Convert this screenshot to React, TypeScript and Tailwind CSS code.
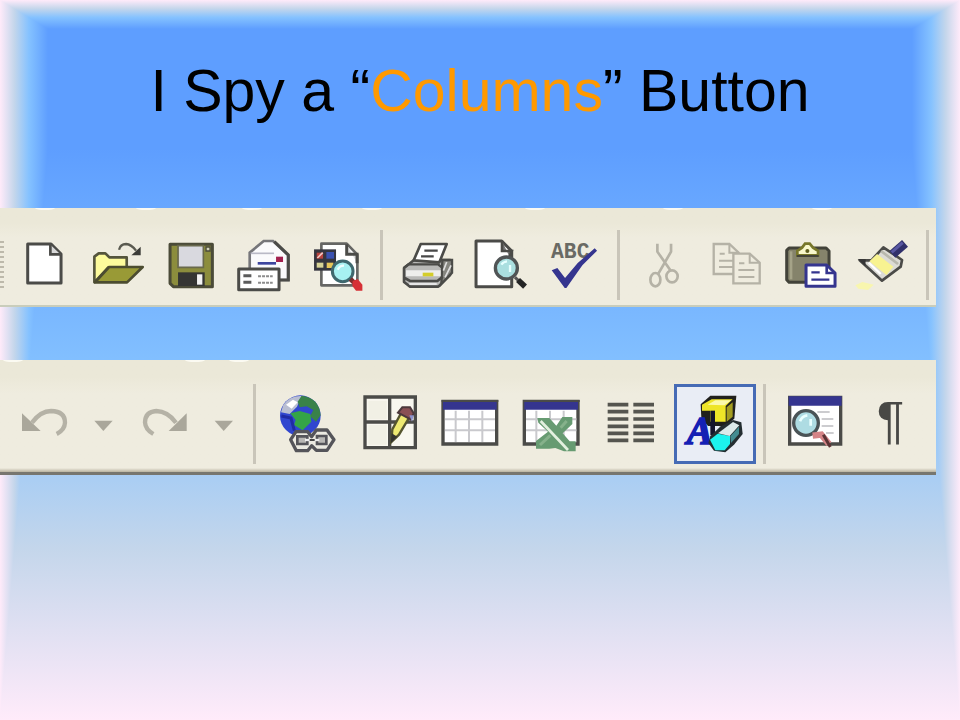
import { clsx } from 'clsx';
import type { ReactNode } from 'react';

const INK = '#4b4b48';
const FADED = '#b5b2a6';
const NAVY = '#35358f';

// Rectangular gradient that radiates from the title area to the slide edges
const SlideBackground = () => {
    const stops = (
        <>
            <stop offset="0" stopColor="#ffebfa" />
            <stop offset="0.3" stopColor="#c4d6eb" />
            <stop offset="0.6" stopColor="#85c2ff" />
            <stop offset="1" stopColor="#5e9eff" />
        </>
    );

    return (
        <svg className="absolute inset-0 -z-10 h-full w-full" viewBox="0 0 960 720" preserveAspectRatio="none" shapeRendering="crispEdges" aria-hidden="true">
            <defs>
                <linearGradient id="fromTop" gradientUnits="userSpaceOnUse" x1="0" y1="0" x2="0" y2="29">
                    {stops}
                </linearGradient>
                <linearGradient id="fromBottom" gradientUnits="userSpaceOnUse" x1="0" y1="720" x2="0" y2="149">
                    {stops}
                </linearGradient>
                <linearGradient id="fromLeft" gradientUnits="userSpaceOnUse" x1="0" y1="0" x2="48" y2="0">
                    {stops}
                </linearGradient>
                <linearGradient id="fromRight" gradientUnits="userSpaceOnUse" x1="960" y1="0" x2="912" y2="0">
                    {stops}
                </linearGradient>
            </defs>
            <rect width="960" height="720" fill="url(#fromBottom)" />
            <path d="M0 0H960L912 29H48Z" fill="url(#fromTop)" />
            <path d="M0 0L48 29V149L0 720Z" fill="url(#fromLeft)" />
            <path d="M960 0L912 29V149L960 720Z" fill="url(#fromRight)" />
        </svg>
    );
};

interface ToolButtonProps {
    label: string;
    box: string;
    active?: boolean;
    narrow?: boolean;
    children: ReactNode;
}

const ToolButton = ({ label, box, active, narrow, children }: ToolButtonProps) => (
    <button
        type="button"
        aria-label={label}
        title={label}
        className={clsx('h-full', narrow ? 'w-[38px]' : 'min-w-0 flex-1', active && 'bg-[#e9edf5] inset-ring-3 inset-ring-[#466bb5]')}
    >
        <svg className="h-full w-full" viewBox={box} fill="none" aria-hidden="true">
            {children}
        </svg>
    </button>
);

const Divider = ({ className }: { className: string }) => (
    <div className={clsx('flex h-full justify-center', className)}>
        <div className="h-full w-[3px] bg-[#c9c5b9]" />
    </div>
);

// Remains of the row above that peek over the top edge of a bar
const TopSpecks = ({ marks }: { marks: number[] }) => (
    <svg className="absolute inset-x-0 top-0 h-1 w-full" viewBox="0 0 936 4" preserveAspectRatio="none" aria-hidden="true">
        {marks.map((x) => (
            <ellipse key={x} cx={x} cy="0" rx="10" ry="2" fill="#fbfaf2" />
        ))}
    </svg>
);

const StandardBar = () => (
    <div
        role="toolbar"
        aria-label="Standard"
        className="relative mr-6 flex h-[99px] items-start border-b-2 border-[#c9cdbb] bg-linear-to-b from-[#ebe8d8] from-15% to-[#efecdf] to-30% pt-[22px]"
    >
        <TopSpecks marks={[45, 146, 252, 372, 535, 673, 822]} />
        <div className="flex h-[70px] w-full">
            <div className="flex w-2 shrink-0 items-center">
                <div className="h-12 w-1 bg-[repeating-linear-gradient(#bdb9ab_0_2px,#efecdf_2px_5px)]" />
            </div>

            <ToolButton label="New" box="24 90 219 210">
                <path d="M83 132H153L183 162V249H83Z" fill="#fff" stroke={INK} strokeWidth="9" strokeLinejoin="round" />
                <path d="M151 134V163H181" fill="#d8d8d8" stroke={INK} strokeWidth="8" />
            </ToolButton>

            <ToolButton label="Open" box="243 90 219 210">
                <path d="M283 247V170L296 160H316L328 172H380V202L325 202Z" fill="#fdfb9c" stroke="#55553c" strokeWidth="8" strokeLinejoin="round" />
                <path d="M285 247L327 201H428L381 247Z" fill="#999a36" stroke="#4c4c30" strokeWidth="8" strokeLinejoin="round" />
                <path d="M357 149Q361 132 378 132Q394 133 408 152" stroke="#5a5a50" strokeWidth="7" />
                <path d="M422 140V166H394Z" fill="#3c3c38" />
            </ToolButton>

            <ToolButton label="Save" box="462 90 219 210">
                <path d="M510 133H637V260H520L510 250Z" fill="#8c8d3d" stroke="#4b4b38" strokeWidth="9" strokeLinejoin="round" />
                <path d="M534 137H610V202H534Z" fill="#d9d9df" stroke="#69694d" strokeWidth="5" />
                <path d="M618 141H630V153H618Z" fill="#d2d2b8" stroke="#4b4b38" strokeWidth="4" />
                <path d="M534 217H614V258H534Z" fill="#353533" />
                <path d="M591 223H607V254H591Z" fill="#f4f4f4" />
            </ToolButton>

            <ToolButton label="E-mail" box="-9 90 219 210">
                <path d="M59 206V158L101 123H129L174 165V240H59Z" fill="#fafafc" stroke="#76767a" strokeWidth="8" />
                <path d="M133 125L175 165V240H150" stroke={INK} strokeWidth="9" />
                <path d="M62 160H132" stroke="#b9b9c6" strokeWidth="5" />
                <path d="M138 170H159V186H138Z" fill="#a2204e" />
                <path d="M83 190H138" stroke="#3d459e" strokeWidth="8" />
                <path d="M26 207H147V269H26Z" fill="#fff" stroke={INK} strokeWidth="9" strokeLinejoin="round" />
                <path d="M40 227H64M40 247H64" stroke="#5b5b5b" strokeWidth="9" />
                <path d="M84 229H128M84 248H128" stroke="#8c8c8c" strokeWidth="6" strokeDasharray="9 3" />
            </ToolButton>

            <ToolButton label="Search" box="210 90 219 210">
                <path d="M274 131H350L382 164V256H274Z" fill="#fff" stroke="#666664" strokeWidth="8" strokeLinejoin="round" />
                <path d="M350 133V163H381V190" fill="#ddd" stroke={INK} strokeWidth="9" />
                <path d="M252 148H318V212H252Z" fill="#35353f" />
                <path d="M260 158H279V176H260Z" fill="#b8433e" />
                <path d="M262 174L278 158" stroke="#f1c8c3" strokeWidth="5" />
                <path d="M289 156H312V176H289Z" fill="#3b51b0" />
                <path d="M260 188H280V203H260Z" fill="#d7d397" />
                <path d="M290 188H310V204H290Z" fill="#e6c55b" />
                <circle cx="338" cy="214" r="31" fill="#a7f1f2" stroke="#3f686e" strokeWidth="9" />
                <path d="M323 209Q329 196 342 197" stroke="#f0ffff" strokeWidth="7" />
                <path d="M361 237L372 248" stroke="#7d2c2c" strokeWidth="14" />
                <path d="M368 243L383 237L397 254V272H378L367 258Z" fill="#d63036" />
            </ToolButton>

            <Divider className="w-[17px] shrink-0" />

            <ToolButton label="Print" box="480 90 219 210">
                <path d="M522 204L552 180H660V225L625 260H540L522 246Z" fill="#b9b9b7" stroke={INK} strokeWidth="8" strokeLinejoin="round" />
                <path d="M637 180L666 180V218L634 252Z" fill="#85857f" stroke={INK} strokeWidth="7" />
                <path d="M650 186L640 212M663 196L645 232" stroke="#dedede" strokeWidth="5" />
                <path d="M551 181L572 132H650L628 187Z" fill="#fff" stroke={INK} strokeWidth="8" strokeLinejoin="round" />
                <path d="M583 152H623M573 169H611" stroke="#484848" strokeWidth="7" />
                <path d="M522 203L535 193H624L638 204" stroke={INK} strokeWidth="7" />
                <path d="M528 211H632V229H528Z" fill="#eeeeec" />
                <path d="M578 218H610V229H578Z" fill="#d4cd2b" />
                <path d="M524 234L540 243H622L638 230" stroke={INK} strokeWidth="8" />
                <path d="M538 252H620" stroke="#f0f0f0" strokeWidth="5" />
            </ToolButton>

            <ToolButton label="Print Preview" box="9 90 219 210">
                <path d="M48 123H125L155 153V260H48Z" fill="#fff" stroke={INK} strokeWidth="9" strokeLinejoin="round" />
                <path d="M126 122V153H155L148 170" fill="#777" stroke={INK} strokeWidth="8" />
                <circle cx="139" cy="204" r="33" fill="#aadfe0" stroke="#505455" strokeWidth="10" />
                <path d="M124 194Q130 185 141 184M150 195V216" stroke="#e6ffff" strokeWidth="7" />
                <path d="M165 232L178 244" stroke="#555" strokeWidth="9" />
                <path d="M174 240L195 260" stroke="#252525" strokeWidth="17" />
            </ToolButton>

            <ToolButton label="Spelling" box="228 90 219 210">
                <text x="270" y="175" fontSize="64" fontWeight="700" fill="#6a6a64" className="font-['Liberation_Mono',monospace]">
                    ABC
                </text>
                <path d="M272 211L289 204L312 234L350 189L401 145L408 152L364 196L316 264H311Z" fill={NAVY} />
            </ToolButton>

            <Divider className="w-[17px] shrink-0" />

            <ToolButton label="Cut" box="498 90 219 210">
                <path d="M589 131V155L628 211M630 131V155L592 221" stroke={FADED} strokeWidth="8" />
                <ellipse cx="583" cy="239" rx="15" ry="20" stroke={FADED} strokeWidth="8" />
                <ellipse cx="633" cy="229" rx="17" ry="18" stroke={FADED} strokeWidth="8" />
            </ToolButton>

            <ToolButton label="Copy" box="27 90 219 210">
                <path d="M68 132H115L143 158V222H68Z" stroke={FADED} strokeWidth="7" fill="#efecdf" />
                <path d="M115 132V158H143M86 161H101M84 182H126M84 201H126" stroke={FADED} strokeWidth="6" />
                <path d="M127 161H176L206 188V250H127Z" stroke={FADED} strokeWidth="7" fill="#efecdf" />
                <path d="M176 161V188H206M144 190H160M142 210H190M142 231H190" stroke={FADED} strokeWidth="6" />
            </ToolButton>

            <ToolButton label="Paste" box="246 90 219 210">
                <path d="M294 144H405L414 153V247H294L287 239V151Z" fill="#85836b" stroke="#424239" strokeWidth="9" strokeLinejoin="round" />
                <path d="M300 154V238" stroke="#a5a388" strokeWidth="8" />
                <path d="M319 166V153L333 143L342 131H356L366 143L381 153V166Z" fill="#f8f7cb" stroke="#77762a" strokeWidth="8" />
                <path d="M317 168H383" stroke="#424239" strokeWidth="6" />
                <circle cx="349" cy="153" r="6" fill="#5e5d20" />
                <path d="M345 195H407L432 219V259H345Z" fill="#fff" stroke={NAVY} strokeWidth="9" strokeLinejoin="round" />
                <path d="M407 196V219H432" stroke={NAVY} strokeWidth="8" />
                <path d="M361 217H386M361 239H415" stroke={NAVY} strokeWidth="7" />
            </ToolButton>

            <ToolButton label="Format Painter" box="465 90 219 210">
                <path d="M493 256L514 246L548 254L531 270L502 266Z" fill="#f8f6ae" />
                <path d="M506 181L541 181L577 142L633 180L629 200L573 242Z" fill="#dcdbd5" stroke={INK} strokeWidth="8" strokeLinejoin="round" />
                <path d="M558 162L607 200L586 225L535 184Z" fill="#f8f391" />
                <path d="M570 153L621 192" stroke="#b8b8ad" strokeWidth="8" />
                <path d="M533 188L569 222" stroke="#fff" strokeWidth="7" />
                <path d="M500 177L524 178L523 199Z" fill="#353535" />
                <path d="M604 163L642 130" stroke="#30306b" strokeWidth="27" />
                <path d="M602 157L635 128" stroke="#5857a1" strokeWidth="9" />
            </ToolButton>

            <Divider className="w-[17px] shrink-0" />
        </div>
    </div>
);

const DropArrow = ({ x }: { x: number }) => <path d={`M${x - 27} 206H${x + 28}L${x} 237Z`} fill="#aaa79b" />;

const DrawingBar = () => (
    <div
        role="toolbar"
        aria-label="Tables and drawing"
        className="relative mr-6 h-[115px] border-b-[3px] border-[#77766f] bg-linear-to-b from-[#ebe8d8] from-15% to-[#efecdf] to-30% pt-6"
    >
        <TopSpecks marks={[13, 195, 239]} />
        <div className="flex h-20 pl-1">
            <ToolButton label="Undo" box="12 96 246 240">
                <path d="M96 212Q122 177 153 177Q195 178 195 212Q194 234 170 246" stroke={FADED} strokeWidth="13" />
                <path d="M66 184L122 237H66Z" fill="#aaa79b" />
            </ToolButton>
            <ToolButton label="Undo history" box="258 96 114 240" narrow>
                <DropArrow x={310} />
            </ToolButton>
            <ToolButton label="Redo" box="372 96 246 240">
                <path d="M528 212Q503 178 469 177Q436 179 435 211Q436 232 460 246" stroke={FADED} strokeWidth="13" />
                <path d="M560 184L506 237H560Z" fill="#aaa79b" />
            </ToolButton>
            <ToolButton label="Redo history" box="618 96 114 240" narrow>
                <DropArrow x={671} />
            </ToolButton>

            <Divider className="w-5 shrink-0" />

            <ToolButton label="Insert Hyperlink" box="12 96 246 240">
                <circle cx="121" cy="191" r="61" fill="#3146cf" />
                <path d="M70 158Q90 130 125 132L111 164L89 186L63 181Z" fill="#b9bed2" />
                <path d="M78 158L99 143L113 151L95 170Z" fill="#fff" />
                <path d="M125 131Q177 137 182 190L168 209L150 193L160 174L140 163L119 166L113 149Z" fill="#398249" />
                <path d="M91 184L119 177L151 186L154 209L128 235L102 219L107 204Z" fill="#34a447" />
                <path d="M64 192L93 198L103 236" stroke="#202ba4" strokeWidth="9" />
                <path d="M92 263L108 239H143L155 254L169 234H201L222 263L201 295H169L155 281L143 296H109Z" fill="#ecebe2" stroke="#55555a" strokeWidth="10" strokeLinejoin="round" />
                <path d="M112 253H142V276H112ZM171 252H199V276H171Z" fill="#b9b8b5" stroke="#55555a" strokeWidth="8" />
                <path d="M135 264H178" stroke="#eee" strokeWidth="7" />
                <path d="M149 264H164" stroke="#444" strokeWidth="6" />
            </ToolButton>

            <ToolButton label="Tables and Borders" box="258 96 246 240">
                <path d="M315 135H466V287H315Z" fill="#f8f7ef" stroke={INK} strokeWidth="10" />
                <path d="M325 146H380V202H325ZM325 219H380V278H325Z" fill="#f1f0e5" />
                <path d="M389 135V287M315 210H466" stroke={INK} strokeWidth="10" />
                <path d="M394 270L397 232L425 180L448 196L417 248Z" fill="#eeea72" stroke="#55552f" strokeWidth="7" />
                <path d="M414 182L427 166H450L461 184L452 202Z" fill="#8a5054" stroke="#4c393c" strokeWidth="6" />
                <path d="M448 190L461 190L456 209Z" fill="#8d93ce" />
                <path d="M392 274L395 244L412 254Z" fill="#343430" />
            </ToolButton>

            <ToolButton label="Insert Table" box="504 96 246 240">
                <path d="M549 148H710V276H549Z" fill="#fff" stroke={INK} strokeWidth="10" />
                <path d="M549 148H710V173H549Z" fill={NAVY} />
                <path d="M587 176V270M627 176V270M667 176V270M555 202H705M555 235H705" stroke="#c9c9cd" strokeWidth="6" />
                <path d="M545 147H715" stroke={INK} strokeWidth="6" />
            </ToolButton>

            <ToolButton label="Insert Microsoft Excel Worksheet" box="60 96 246 240">
                <path d="M103 148H264V276H103Z" fill="#fff" stroke={INK} strokeWidth="10" />
                <path d="M103 148H264V173H103Z" fill={NAVY} />
                <path d="M139 176V270M180 176V270M221 176V270M108 202H259M108 235H259" stroke="#c9c9cd" strokeWidth="6" />
                <path d="M99 147H269" stroke={INK} strokeWidth="6" />
                <path d="M142 198H178L199 221L217 195H247V216L218 244L239 268H257V298H222L196 288L178 290H138V267L174 239L145 212Z" fill="#679b72" />
                <path d="M152 207L234 294" stroke="#e3f0df" strokeWidth="8" />
                <path d="M230 207L212 227M150 279L181 250" stroke="#86b18b" strokeWidth="9" />
            </ToolButton>

            <ToolButton label="Columns" box="306 96 246 240">
                {[158, 179, 201, 223, 244, 265].map((y) => (
                    <path key={y} d={`M353 ${y}H415M430 ${y}H492`} stroke="#55554f" strokeWidth="11" />
                ))}
            </ToolButton>

            <ToolButton label="Drawing" box="552 96 246 240" active>
                <path d="M632 157L661 131H739L733 200L705 222H654L634 197Z" fill="#20201c" />
                <path d="M636 158L665 142H728L707 162V209H660V176H636Z" fill="#eee528" />
                <path d="M653 158L676 145H724L703 160Z" fill="#fbf9ac" />
                <path d="M710 166L728 151V194L710 209Z" fill="#a49d20" />
                <text x="590" y="275" fontSize="118" fontWeight="700" fontStyle="italic" fill="#1420b4" stroke="#1420b4" strokeWidth="5" className="font-['Liberation_Serif',serif]">
                    A
                </text>
                <path d="M668 176V250" stroke="#15152b" strokeWidth="14" />
                <path d="M661 253L692 223L729 204L754 211L758 246L732 278L706 301L672 296L655 273Z" fill="#242e31" />
                <path d="M660 263L683 245L720 252V276L704 295H676Z" fill="#1cf3ee" />
                <path d="M684 244L729 210L748 220L719 252Z" fill="#dceaea" />
                <path d="M721 253L747 224V246L723 273Z" fill="#438c91" />
            </ToolButton>

            <Divider className="w-4 shrink-0" />

            <ToolButton label="Document Map" box="216 96 246 240">
                <path d="M269 136H422V276H269Z" fill="#fff" stroke={INK} strokeWidth="10" />
                <path d="M266 133H425V161H266Z" fill={NAVY} />
                <path d="M352 180H389M365 201H400M365 222H400M378 243H401" stroke="#bcbcc0" strokeWidth="5" />
                <circle cx="318" cy="213" r="37" fill="#aedce3" stroke="#4a5356" strokeWidth="10" />
                <path d="M300 208Q306 192 322 190M332 201V221" stroke="#eaffff" strokeWidth="8" />
                <path d="M338 251L364 248L387 276" stroke="#d58487" strokeWidth="19" />
                <path d="M370 248L391 285" stroke="#5a3335" strokeWidth="9" />
            </ToolButton>

            <ToolButton label="Show/Hide ¶" box="462 96 246 240">
                <text x="530" y="257" fontSize="154" fill="#484845" className="font-['Liberation_Sans',sans-serif]">
                    ¶
                </text>
            </ToolButton>
        </div>
        <div className="absolute inset-x-0 bottom-0 h-1 bg-linear-to-b from-[#efecdf] to-[#b9b3a0]" />
    </div>
);

const App = () => {
    return (
        <main className="relative isolate min-h-screen overflow-hidden">
            <SlideBackground />
            <h1 className="flex h-[208px] items-start justify-center pt-[59px] text-center font-['Liberation_Sans',Arial,sans-serif] text-[59px] leading-[64px] text-black">
                <span>
                    I Spy a “<span className="text-[#ff9900]">Columns</span>” Button
                </span>
            </h1>
            <div className="flex flex-col gap-[53px]">
                <StandardBar />
                <DrawingBar />
            </div>
        </main>
    );
};

export default App;
